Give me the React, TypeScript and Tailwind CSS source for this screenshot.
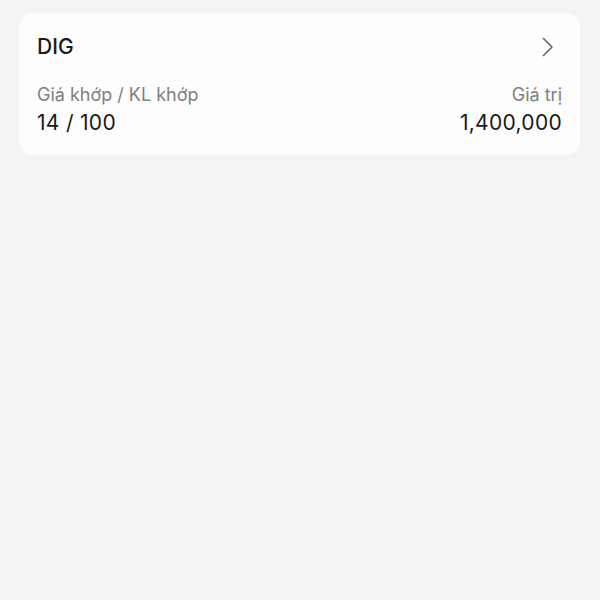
import React from "react";

export default function App() {
  return (
    <div
      className="w-[600px] h-[600px] bg-[#f4f4f4] pt-[13px] pl-[19px] pr-[20px]"
      style={{ fontFamily: "Inter, 'Noto Sans', sans-serif" }}
    >
      <div className="bg-[#fdfdfd] rounded-[14px] px-[18px] pt-[20px] pb-[18px]">
        <div className="flex items-center justify-between h-[28px]">
          <span className="text-[21px] leading-[28px] font-medium text-[#1a1a1a]">DIG</span>
          <svg width="12" height="20" viewBox="0 0 12 20" className="mr-[8px]">
            <path d="M1.5 1.5 L10 10 L1.5 18.5" fill="none" stroke="#666" strokeWidth="1.6" strokeLinecap="round" strokeLinejoin="round" />
          </svg>
        </div>
        <div className="flex justify-between mt-[22px]">
          <div className="flex flex-col gap-[2px]">
            <span className="text-[18px] leading-[24px] text-[#808080]">Giá khớp / KL khớp</span>
            <span className="text-[21px] leading-[28px] tracking-[0.3px] text-[#1a1a1a]">14 / 100</span>
          </div>
          <div className="flex flex-col items-end gap-[2px]">
            <span className="text-[18px] leading-[24px] text-[#808080]">Giá trị</span>
            <span className="text-[21px] leading-[28px] tracking-[0.3px] text-[#1a1a1a]">1,400,000</span>
          </div>
        </div>
      </div>
    </div>
  );
}
